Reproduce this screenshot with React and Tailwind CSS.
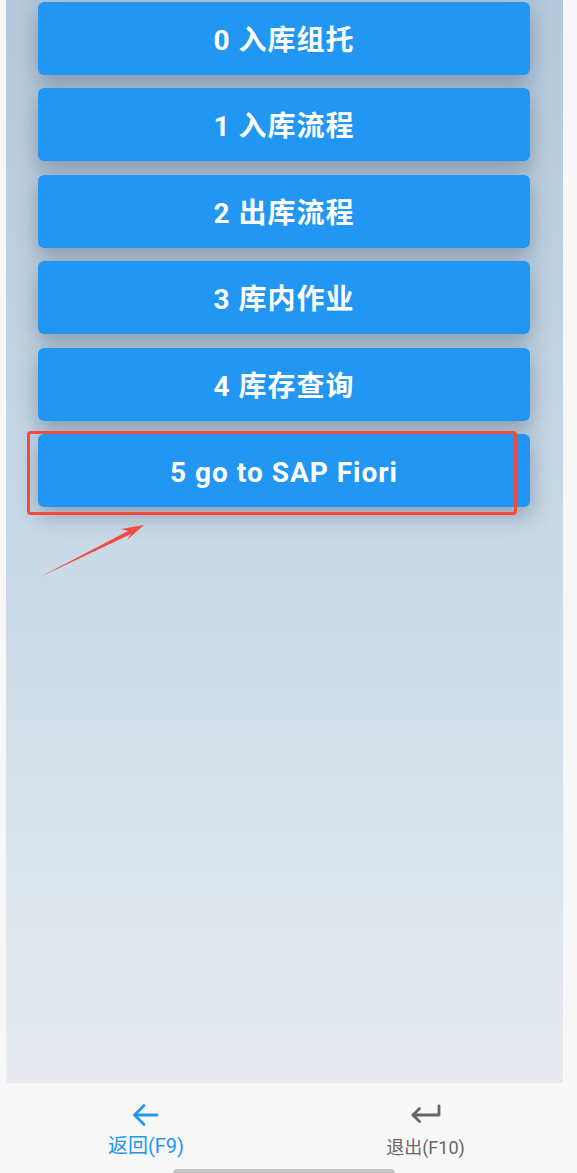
import React from "react";

const items = ["0 入库组托", "1 入库流程", "2 出库流程", "3 库内作业", "4 库存查询", "5 go to SAP Fiori"];

export default function App() {
  return (
    <div
      className="relative w-[577px] h-[1173px] bg-[#f7f7f7] flex flex-col overflow-hidden"
      style={{ fontFamily: 'Roboto, "Noto Sans CJK SC", sans-serif' }}
    >
      <div className="ml-[6px] w-[557px] h-[1083px] bg-[linear-gradient(to_bottom,#b5c9dc,#c9d9e6_50%,#e7ebef)]">
        <div className="flex flex-col gap-[13.4px] pl-[32px] pt-[2px] w-[524px]">
          {items.map((t) => (
            <button
              key={t}
              className="h-[73px] w-[492px] rounded-[6px] bg-[#2196f3] text-white text-[28px] tracking-[1px] font-bold shadow-[0_8px_22px_rgba(55,75,95,0.42)] flex items-center justify-center pt-[5px]"
            >
              {t}
            </button>
          ))}
        </div>
      </div>

      <div className="flex-1 bg-[#f8f8f8] flex">
        <div className="w-[290px] flex flex-col items-center pt-[19px] pl-[2px]">
          <svg width="28" height="26" viewBox="0 0 28 26" fill="none" stroke="#2196f3" strokeWidth="2.8" strokeLinecap="round" strokeLinejoin="round">
            <path d="M25 13H3" />
            <path d="M12 3.5L2.5 13l9.5 9.5" />
          </svg>
          <span className="text-[20px] leading-none mt-[8px] text-[#2196f3]">返回(F9)</span>
        </div>
        <div className="flex-1 flex flex-col items-center pt-[21px] pr-[16px]">
          <svg width="32" height="20" viewBox="0 0 32 20" fill="none" stroke="#666666" strokeWidth="2.8" strokeLinecap="round" strokeLinejoin="round">
            <path d="M29 2v9H3" />
            <path d="M9.5 4.5L3 11l6.5 6.5" />
          </svg>
          <span className="text-[18px] leading-none mt-[15px] text-[#666666]">退出(F10)</span>
        </div>
      </div>

      <div className="absolute left-[173px] top-[1169px] w-[222px] h-[8px] rounded-full bg-[#c6c6c6]" />

      <div className="absolute left-[27px] top-[431px] w-[490px] h-[84px] border-[3px] border-[#ef4b3f] rounded-[4px]" />

      <svg className="absolute left-[38px] top-[520px]" width="112" height="60" viewBox="0 0 112 60">
        <polygon points="2,57 93,14 89,20 106,5 83,9 90,11" fill="#ef4b3f" />
      </svg>
    </div>
  );
}
